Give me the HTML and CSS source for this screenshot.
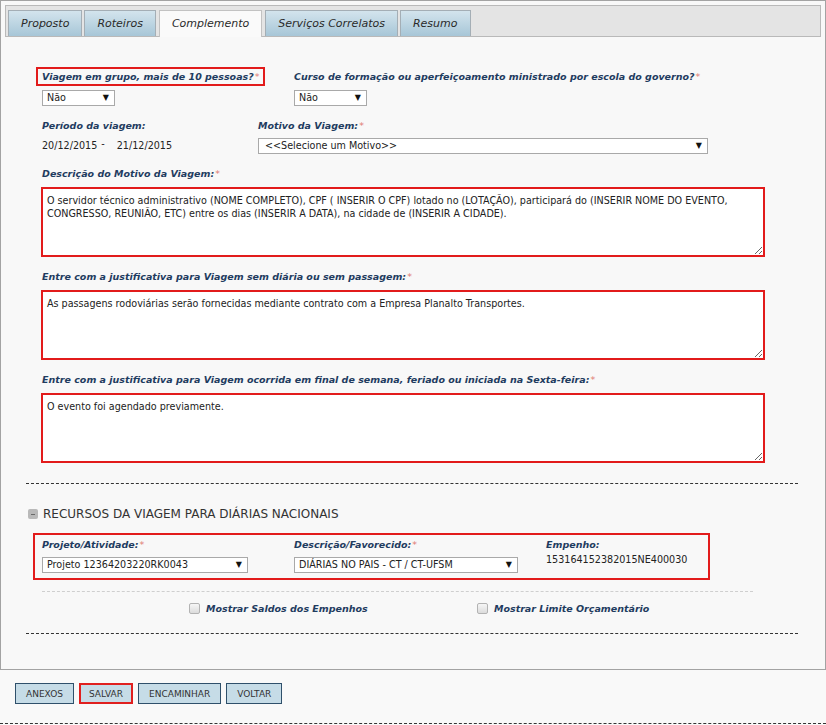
FILE: index.html
```html
<!DOCTYPE html>
<html lang="pt-BR">
<head>
<meta charset="utf-8">
<title>Complemento</title>
<link rel="stylesheet" href="styles.css">
</head>
<body>
<div class="panel">
  <div class="tabbar">
    <div class="tab">Proposto</div>
    <div class="tab">Roteiros</div>
    <div class="tab active">Complemento</div>
    <div class="tab">Serviços Correlatos</div>
    <div class="tab">Resumo</div>
  </div>
  <div class="section">
    <div class="fields">
      <div class="row row1">
        <div class="col c252">
          <div class="qlabel hl">Viagem em grupo, mais de 10 pessoas?<span class="req">*</span></div>
          <div class="select s-nao"><span>Não</span><span class="arr">▼</span></div>
        </div>
        <div class="col">
          <div class="qlabel">Curso de formação ou aperfeiçoamento ministrado por escola do governo?<span class="req">*</span></div>
          <div class="select s-nao"><span>Não</span><span class="arr">▼</span></div>
        </div>
      </div>
      <div class="row row2">
        <div class="col c216">
          <div class="lbl">Período da viagem:</div>
          <div class="dates"><span>20/12/2015</span><span class="dash">-</span><span class="d2">21/12/2015</span></div>
        </div>
        <div class="col">
          <div class="lbl">Motivo da Viagem:<span class="req">*</span></div>
          <div class="select s-motivo"><span>&lt;&lt;Selecione um Motivo&gt;&gt;</span><span class="arr">▼</span></div>
        </div>
      </div>
      <div class="group">
        <div class="lbl">Descrição do Motivo da Viagem:<span class="req">*</span></div>
        <textarea class="ta">O servidor técnico administrativo (NOME COMPLETO), CPF ( INSERIR O CPF) lotado no (LOTAÇÃO), participará do (INSERIR NOME DO EVENTO,&#10;CONGRESSO, REUNIÃO, ETC) entre os dias (INSERIR A DATA), na cidade de (INSERIR A CIDADE).</textarea>
      </div>
      <div class="group">
        <div class="lbl">Entre com a justificativa para Viagem sem diária ou sem passagem:<span class="req">*</span></div>
        <textarea class="ta">As passagens rodoviárias serão fornecidas mediante contrato com a Empresa Planalto Transportes.</textarea>
      </div>
      <div class="group">
        <div class="lbl">Entre com a justificativa para Viagem ocorrida em final de semana, feriado ou iniciada na Sexta-feira:<span class="req">*</span></div>
        <textarea class="ta">O evento foi agendado previamente.</textarea>
      </div>
    </div>
    <div class="dash-line sep1"></div>
    <div class="rec-head"><span class="toggle"><span class="minus"></span></span><span>RECURSOS DA VIAGEM PARA DIÁRIAS NACIONAIS</span></div>
    <div class="rec-box">
      <div class="col c252">
        <div class="lbl">Projeto/Atividade:<span class="req">*</span></div>
        <div class="select s-proj"><span>Projeto 12364203220RK0043</span><span class="arr">▼</span></div>
      </div>
      <div class="col c252">
        <div class="lbl">Descrição/Favorecido:<span class="req">*</span></div>
        <div class="select s-desc"><span>DIÁRIAS NO PAIS - CT / CT-UFSM</span><span class="arr">▼</span></div>
      </div>
      <div class="col">
        <div class="lbl">Empenho:</div>
        <div class="value">153164152382015NE400030</div>
      </div>
    </div>
    <div class="light-line"></div>
    <div class="checks">
      <div class="check-item"><span class="cbox"></span><span class="lbl">Mostrar Saldos dos Empenhos</span></div>
      <div class="check-item"><span class="cbox"></span><span class="lbl">Mostrar Limite Orçamentário</span></div>
    </div>
    <div class="dash-line sep2"></div>
  </div>
</div>
<div class="buttons">
  <button class="btn">ANEXOS</button>
  <button class="btn btn-hl">SALVAR</button>
  <button class="btn">ENCAMINHAR</button>
  <button class="btn">VOLTAR</button>
</div>
<div class="dash-line bottom"></div>
</body>
</html>
```
FILE: styles.css
```css
* { box-sizing: border-box; }
html, body { margin: 0; padding: 0; }
body {
  width: 826px;
  height: 725px;
  overflow: hidden;
  background: #f9f9f9;
  font-family: "DejaVu Sans", Verdana, sans-serif;
  font-size: 9.6px;
  color: #222;
}
.panel {
  height: 670px;
  border: 1px solid #a3a3a3;
  background: #f8f8f8;
}
.tabbar {
  margin: 4px 4px 0;
  height: 32px;
  border: 1px solid #b9b9b9;
  background: #e4e4e4;
  padding: 4px 2px 0;
  display: flex;
  align-items: flex-start;
}
.tab {
  height: 26px;
  margin-right: 2px;
  padding: 0 12px;
  border: 1px solid #a4aeb5;
  border-bottom: none;
  background: linear-gradient(#d3e4ed, #a7c6d7);
  font-size: 11px;
  font-style: italic;
  line-height: 26px;
  color: #2a2a2a;
  white-space: nowrap;
}
.tab.active {
  height: 27px;
  background: #fafafa;
  border-color: #c2c2c2;
  margin-left: 1px;
  margin-right: 3px;
}
.section {
  margin: 0 27px 0 25px;
}
.fields {
  padding-left: 16px;
}
.row { display: flex; }
.row1 { margin-top: 30px; }
.row2 { margin-top: 14px; }
.col { display: flex; flex-direction: column; align-items: flex-start; }
.c252 { width: 252px; flex: none; }
.c216 { width: 216px; flex: none; }
.lbl, .qlabel {
  font-weight: bold;
  font-style: italic;
  font-size: 9.5px;
  line-height: 12px;
  color: #1f3c60;
  white-space: nowrap;
}
.qlabel {
  border: 2px solid transparent;
  padding: 2px 4px 1px;
  margin-left: -6px;
}
.qlabel.hl { border-color: #e21b1b; }
.req { color: #e07a72; font-weight: normal; font-style: normal; margin-left: 1px; }
.select {
  display: flex;
  justify-content: space-between;
  align-items: center;
  height: 16px;
  border: 1px solid #a9a9a9;
  background: #fff;
  padding: 0 5px 0 4px;
  font-size: 9.6px;
  line-height: 14px;
  color: #222;
  white-space: nowrap;
}
.select .arr { font-size: 8px; color: #111; }
.row1 .select { margin-top: 4px; }
.s-nao { width: 73px; }
.s-motivo { width: 450px; margin-top: 6px; padding-left: 6px; }
.dates {
  margin-top: 6px;
  line-height: 16px;
  display: flex;
}
.dash { margin-left: 4px; position: relative; top: -2px; }
.d2 { margin-left: 12px; }
.group { margin-top: 14px; }
.ta {
  display: block;
  margin: 7px 0 0 -1px;
  width: 724px;
  height: 70px;
  border: 2px solid #e21b1b;
  background: #fff;
  padding: 5px 4px;
  font-family: "DejaVu Sans", Verdana, sans-serif;
  font-size: 9.6px;
  line-height: 13px;
  color: #222;
  resize: vertical;
  overflow: hidden;
}
.dash-line { border-top: 1px dashed #333; height: 1px; }
.sep1 { margin-top: 20px; }
.rec-head {
  margin-top: 23px;
  display: flex;
  align-items: center;
  gap: 5px;
  padding-left: 2px;
  line-height: 14px;
  font-size: 12px;
  color: #333;
}
.toggle {
  width: 10px;
  height: 10px;
  border-radius: 2px;
  background: #b9b9b9;
  display: flex;
  align-items: center;
  justify-content: center;
}
.minus { width: 4px; height: 1px; background: #6a6a6a; }
.rec-box {
  margin: 12px 0 0 7px;
  width: 677px;
  border: 2px solid #e21b1b;
  padding: 4px 7px 5px;
  display: flex;
}
.rec-box .select { margin-top: 6px; }
.s-proj { width: 206px; }
.s-desc { width: 224px; }
.value { margin-top: 3px; line-height: 12px; }
.light-line {
  margin: 11px 45px 0 16px;
  border-top: 1px dashed #cfcfcf;
}
.checks {
  margin-top: 11px;
  padding-left: 163px;
  display: flex;
}
.check-item {
  width: 288px;
  display: flex;
  align-items: center;
  gap: 6px;
  height: 11px;
}
.cbox {
  width: 11px;
  height: 11px;
  border: 1px solid #b3b3b3;
  border-radius: 2px;
  background: linear-gradient(#f6f6f6, #dcdcdc);
  flex: none;
}
.check-item .lbl { line-height: 11px; }
.sep2 { margin-top: 19px; }
.buttons {
  margin: 13px 0 0 15px;
  display: flex;
  gap: 5px;
}
.btn {
  height: 21px;
  border: 1px solid #2f506b;
  background: #c6dce7;
  color: #333;
  font-family: "DejaVu Sans", Verdana, sans-serif;
  font-size: 9px;
  padding: 0 10px;
  margin: 0;
}
.btn-hl { border: 2px solid #e0201f; padding: 0 8px; }
.bottom { margin-top: 19px; }
```
